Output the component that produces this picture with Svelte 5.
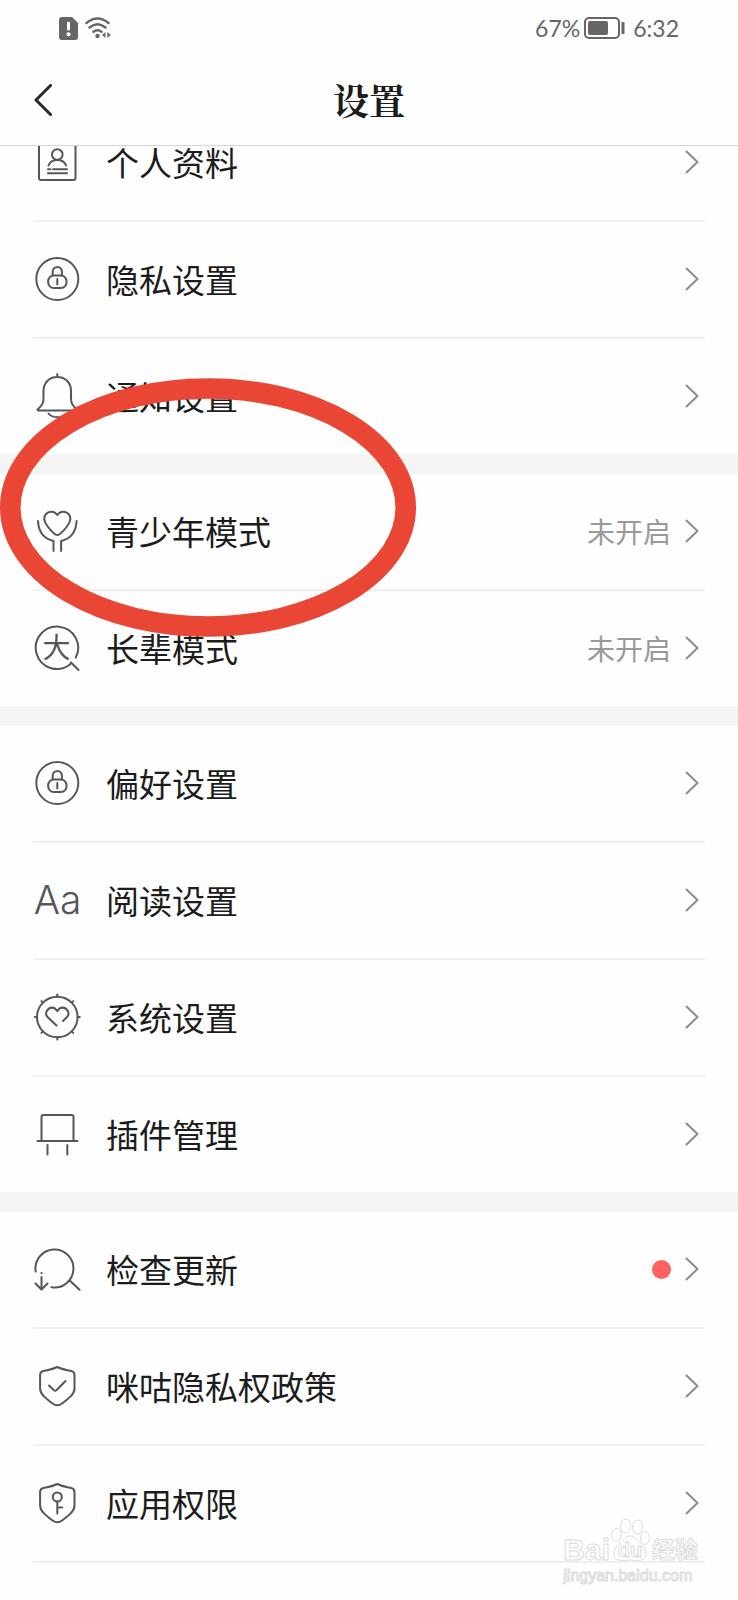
<script>
  const groups = [
    [
      { icon: 'profile', label: '个人资料' },
      { icon: 'lock', label: '隐私设置' },
      { icon: 'bell', label: '通知设置' }
    ],
    [
      { icon: 'youth', label: '青少年模式', value: '未开启' },
      { icon: 'elder', label: '长辈模式', value: '未开启' }
    ],
    [
      { icon: 'lock', label: '偏好设置' },
      { icon: 'reading', label: '阅读设置' },
      { icon: 'system', label: '系统设置' },
      { icon: 'plugin', label: '插件管理' }
    ],
    [
      { icon: 'update', label: '检查更新', dot: true },
      { icon: 'policy', label: '咪咕隐私权政策' },
      { icon: 'permission', label: '应用权限' }
    ]
  ];
</script>

{#snippet rowIcon(name)}
  <svg class="icon" viewBox="0 0 48 48" aria-hidden="true">
    {#if name === 'profile'}
      <rect x="6" y="5" width="36.500" height="37" rx="2" />
      <circle cx="24.3" cy="16.5" r="5.3" />
      <path d="M15.5 27.5C17 23.5 20 22 24.3 22s7.300 1.500 8.800 5.500M15 31.300h2.500M20 31.300h14M15 35.300h19" />
    {:else if name === 'lock'}
      <circle cx="24.3" cy="24" r="21" />
      <rect x="15.200" y="20.500" width="18.300" height="12.500" rx="5.500" />
      <path d="M19.700 20.500v-4a4.600 4.600 0 0 1 9.200 0v4M24.300 24v5.500" />
    {:else if name === 'bell'}
      <path d="M24.300 2v3M24.300 5C16 5 10.500 11 10.500 19v7c0 5-1 7-5.500 11-1 1-.5 1.500.5 1.500h37.500c1 0 1.500-.5.5-1.500-4.500-4-5.500-6-5.500-11v-7C38.100 11 32.500 5 24.300 5z" />
      <path d="M15.500 41.500c4 5 13.600 5 17.600 0" />
    {:else if name === 'youth'}
      <path d="M24.300 8C21.500 4 16 3.500 13 7c-2.500 3-2 7.500 1 11.500 2.500 3.500 5.500 7 8.500 9 1.200.8 2.400.8 3.600 0 3-2 6-5.500 8.500-9 3-4 3.500-8.500 1-11.500-3-3.500-8.500-3-11.300 1z" />
      <path d="M5 14c.5 10 5 17.500 15.500 20v10M43.600 14c-.5 10-5 17.500-15.500 20v10" />
    {:else if name === 'elder'}
      <path d="M42.800 33.500A21.200 21.200 0 1 0 37 40.500l1-2 7.500 7.500" />
      <text class="big" x="23.500" y="34" text-anchor="middle">大</text>
    {:else if name === 'reading'}
      <text class="latin" x="24.500" y="38" text-anchor="middle">Aa</text>
    {:else if name === 'system'}
      <circle cx="24.300" cy="24" r="20.300" />
      {#each [0, 45, 90, 135, 180, 225, 270, 315] as angle}
        <path d="M24.300 3.700V1.500" transform="rotate({angle} 24.300 24)" />
      {/each}
      <path d="M23.500 32.500l-9-8.500c-4-5 2-11.500 7.500-8.500l2.300 2.500 2.300-2.500c5.500-3 11.500 3.500 7.500 8.500L30 28" />
    {:else if name === 'plugin'}
      <path d="M8.500 31V7q0-2 2-2h28q2 0 2 2v24M4.500 31h40M14.500 35v9.500M34.300 35v9.500" />
    {:else if name === 'update'}
      <path d="M2.700 26.500A19 19 0 1 1 18.500 42.200a19 19 0 0 0 18-7l10 9.500M8.500 28v.2M8.500 32v12M2.500 38.500l6 6 6-6" />
    {:else}
      <path d="M24.300 5c5 2.500 9.500 3 14 4 2.200.5 3.200 1.500 3.200 4v13.500c0 6-6.500 10.500-12.500 15-3.200 2.500-6.200 2.500-9.400 0-6-4.500-12.500-9-12.500-15V13c0-2.500 1-3.500 3.200-4 4.500-1 9-1.500 14-4z" />
      {#if name === 'policy'}
        <path d="M16 23.500l5 4.700q1.200 1 2.400 0L32.500 19" />
      {:else}
        <circle cx="24.300" cy="18" r="4.500" />
        <path d="M24.300 22.500v12M24.300 28.500h5" />
      {/if}
    {/if}
  </svg>
{/snippet}

<div class="page">
  <header class="top">
    <div class="status">
      <div class="status-side">
        <svg class="sim" viewBox="0 0 19 23" aria-hidden="true">
          <path d="M3 0h10l6 6v14q0 3-3 3H3q-3 0-3-3V3q0-3 3-3z" fill="#666" />
          <path d="M9.500 6v6" stroke="#fff" stroke-width="3" stroke-linecap="round" />
          <circle cx="9.500" cy="17.300" r="2" fill="#fff" />
        </svg>
        <svg class="wifi" viewBox="0 0 26 22" aria-hidden="true">
          <g fill="none" stroke="#666" stroke-width="2.400" stroke-linecap="round">
            <path d="M1.500 6Q12.500-3 23.500 6M4.500 10.500q8-6.500 16 0M8.500 14.700q4-3 8 0" />
          </g>
          <circle cx="12.500" cy="19" r="2.200" fill="#666" />
          <path d="M20.500 15v6l-3.500-3zM22.300 15v6l3.500-3z" fill="#666" />
        </svg>
      </div>
      <div class="status-side end">
        <span>67%</span>
        <svg class="battery" viewBox="0 0 41 22" aria-hidden="true">
          <rect x="1" y="1" width="34" height="20" rx="4" fill="none" stroke="#666" stroke-width="2" />
          <rect x="4" y="4" width="20" height="14" rx="2" fill="#666" />
          <rect x="37.500" y="5" width="3" height="12" rx="1" fill="#666" />
        </svg>
        <span class="clock">6:32</span>
      </div>
    </div>
    <nav class="bar">
      <button class="back" aria-label="返回">
        <svg viewBox="0 0 18 32" aria-hidden="true">
          <path d="M16.500 1.500L2 16l14.500 14.500" />
        </svg>
      </button>
      <h1>设置</h1>
    </nav>
  </header>

  <main>
    {#each groups as group}
      <ul class="group">
        {#each group as item}
          <li>
            <button class="row">
              {@render rowIcon(item.icon)}
              <span class="label">{item.label}</span>
              {#if item.value}
                <span class="value">{item.value}</span>
              {/if}
              {#if item.dot}
                <span class="dot"></span>
              {/if}
              <svg class="chevron" viewBox="0 0 14 24" aria-hidden="true">
                <path d="M1.500 1.500L12.500 12l-11 10.500" />
              </svg>
            </button>
          </li>
        {/each}
      </ul>
    {/each}
  </main>

  <svg class="highlight" viewBox="0 0 416 260" aria-hidden="true">
    <ellipse cx="208" cy="129.500" rx="197.700" ry="119" />
  </svg>

  <div class="watermark">
    <div class="brand">
      <span class="bai">Bai</span>
      <svg class="paw" viewBox="0 0 40 44" aria-hidden="true">
        <ellipse cx="6.500" cy="17" rx="5" ry="6.500" />
        <ellipse cx="15.500" cy="8" rx="5" ry="7" />
        <ellipse cx="27.500" cy="9" rx="5" ry="7" />
        <ellipse cx="35" cy="20" rx="4.500" ry="6.500" />
        <path d="M20 18c-5 0-7 4-10 7s-6 6-6 11c0 7 6 7 16 6 10 1 15 1 16-6 0-5-3-8-6-11s-5-7-10-7z" />
        <text x="20" y="39" text-anchor="middle">du</text>
      </svg>
      <span class="jingyan">经验</span>
    </div>
    <div class="site">jingyan.baidu.com</div>
  </div>
</div>

<style>
  :global(body) {
    margin: 0;
    background: #fefefe;
  }

  .page {
    position: relative;
    min-height: 100vh;
    overflow: hidden;
    background: #fefefe;
    color: #1c1c1c;
    font-family: "Noto Sans CJK SC", sans-serif;
  }

  .top {
    position: relative;
    z-index: 1;
    background: #fefefe;
    border-bottom: 1px solid #d4d4d4;
  }

  .status {
    display: flex;
    justify-content: space-between;
    align-items: center;
    height: 56px;
    padding: 0 59px;
    color: #666;
    font-family: Lato, sans-serif;
    font-size: 23px;
  }

  .status-side {
    display: flex;
    align-items: center;
    gap: 7px;
  }

  .end {
    gap: 4px;
  }

  .clock {
    margin-left: 4px;
  }

  .sim {
    width: 19px;
    height: 23px;
  }

  .wifi {
    width: 26px;
    height: 22px;
  }

  .battery {
    width: 41px;
    height: 22px;
  }

  .bar {
    display: grid;
    grid-template-columns: 1fr auto 1fr;
    align-items: center;
    height: 87px;
    padding: 0 34px 2px;
  }

  .back {
    display: flex;
    justify-self: start;
    padding: 0;
    border: 0;
    background: none;
  }

  .back svg {
    width: 18px;
    height: 32px;
    fill: none;
    stroke: #2a2a2e;
    stroke-width: 3;
    stroke-linecap: round;
    stroke-linejoin: round;
  }

  h1 {
    margin: 0;
    font-family: "Noto Serif CJK SC", "Noto Sans CJK SC", serif;
    font-size: 36px;
    font-weight: 700;
    line-height: 48px;
  }

  main {
    margin-top: -41px;
  }

  .group {
    margin: 0;
    padding: 0 33px;
    list-style: none;
  }

  .group + .group {
    border-top: 20px solid #f4f4f4;
  }

  li {
    border-bottom: 2px solid #f0f0f0;
  }

  .group:not(:last-child) li:last-child {
    border-bottom: 0;
  }

  .row {
    display: flex;
    align-items: center;
    width: 100%;
    height: 115px;
    padding: 0 6px 1px 0;
    border: 0;
    background: none;
    color: inherit;
    font: inherit;
    text-align: left;
  }

  .icon {
    flex: none;
    width: 48px;
    height: 48px;
    fill: none;
    stroke: #54565c;
    stroke-width: 2;
    stroke-linecap: round;
    stroke-linejoin: round;
  }

  .icon text {
    fill: #54565c;
    stroke: none;
  }

  .big {
    font-size: 28px;
    font-weight: 400;
  }

  .latin {
    font-family: Inter, sans-serif;
    font-size: 39px;
    font-weight: 300;
  }

  .label {
    flex: 1;
    margin-left: 25px;
    font-size: 33px;
    line-height: 48px;
  }

  .value {
    margin-right: 14px;
    color: #999;
    font-size: 28px;
    line-height: 40px;
  }

  .dot {
    width: 19px;
    height: 19px;
    margin-right: 14px;
    border-radius: 50%;
    background: #ff6060;
  }

  .chevron {
    flex: none;
    width: 14px;
    height: 24px;
    fill: none;
    stroke: #8c8c8c;
    stroke-width: 2;
    stroke-linecap: round;
    stroke-linejoin: round;
  }

  .highlight {
    position: absolute;
    z-index: 2;
    top: 378px;
    left: 0;
    width: 416px;
    height: 260px;
    fill: none;
    stroke: #e94636;
    stroke-width: 20.600;
    pointer-events: none;
  }

  .watermark {
    position: absolute;
    right: 40px;
    bottom: 14px;
    color: #fefefe;
    font-family: "Liberation Sans", "Noto Sans CJK SC", sans-serif;
    -webkit-text-stroke: 1px #dcdcdc;
    pointer-events: none;
  }

  .brand {
    display: flex;
    align-items: flex-end;
  }

  .bai {
    font-size: 30px;
    font-weight: 700;
    line-height: 32px;
  }

  .paw {
    width: 40px;
    height: 44px;
    margin-bottom: 4px;
    fill: #fefefe;
    stroke: #dcdcdc;
    stroke-width: 1;
  }

  .paw text {
    font-size: 20px;
    font-weight: 700;
  }

  .jingyan {
    margin-left: 2px;
    font-size: 23px;
    font-weight: 700;
    line-height: 32px;
  }

  .site {
    font-size: 16px;
    line-height: 20px;
  }
</style>
